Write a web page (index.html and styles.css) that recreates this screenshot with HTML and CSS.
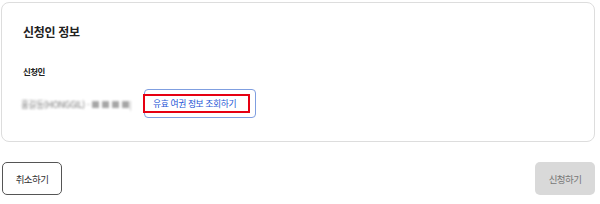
FILE: index.html
```html
<!DOCTYPE html>
<html lang="ko">
<head>
    <meta charset="UTF-8">
    <meta name="viewport" content="width=device-width, initial-scale=1.0">
    <title>신청인 정보</title>
    <link rel="stylesheet" href="styles.css">
</head>
<body>
    <div class="page">
        <!-- 신청인 정보 카드 -->
        <section class="info-card">
            <h2 class="info-title">신청인 정보</h2>
            <div class="field">
                <div class="field-label">신청인</div>
                <div class="field-row">
                    <span class="applicant-name">홍길동(HONGGIL) <span class="applicant-num">- ■ ■ ■ ■|</span></span>
                    <button class="passport-btn"><span class="passport-mark">유효 여권 정보 조회하기</span></button>
                </div>
            </div>
        </section>

        <!-- 하단 버튼 -->
        <div class="actions">
            <button class="btn btn-cancel">취소하기</button>
            <button class="btn btn-submit" disabled>신청하기</button>
        </div>
    </div>
</body>
</html>
```

FILE: styles.css
```css
body {
    margin: 0;
    background: white;
    font-family: "Noto Sans CJK KR", "Noto Sans", sans-serif;
    color: #222;
}

.page {
    width: 594px;
    padding: 2px 0 0 1px;
}

.info-card {
    border: 1px solid #ddd;
    border-radius: 8px;
    padding: 20px 21px 18px;
    height: 140px;
    box-sizing: border-box;
}

.info-title {
    margin: 0;
    font-size: 12px;
    font-weight: bold;
    line-height: 18px;
    letter-spacing: -0.3px;
}

.field {
    margin-top: 23px;
}

.field-label {
    font-size: 8.5px;
    font-weight: bold;
    line-height: 14px;
    letter-spacing: -0.6px;
}

.field-row {
    display: flex;
    align-items: center;
    gap: 10px;
    margin-top: 11px;
}

.applicant-name {
    flex-shrink: 0;
    width: 111px;
    margin-left: -2px;
    padding-right: 2px;
    white-space: nowrap;
    font-size: 8.6px;
    color: #777;
    filter: blur(1.1px);
    letter-spacing: -0.3px;
}

.applicant-num {
    color: #a5a5a5;
    letter-spacing: -0.5px;
}

.passport-btn {
    display: flex;
    align-items: center;
    width: 112px;
    height: 29px;
    padding: 0;
    border: 1px solid #7f9ee0;
    border-radius: 4px;
    background: white;
    font-family: inherit;
    cursor: pointer;
}

.passport-mark {
    display: block;
    width: 107px;
    height: 19px;
    box-sizing: border-box;
    margin-left: -2px;
    padding-left: 8px;
    border: 2px solid #e60012;
    color: #2455d6;
    font-size: 8.8px;
    line-height: 15px;
    text-align: left;
    white-space: nowrap;
    letter-spacing: -0.4px;
}

.actions {
    display: flex;
    justify-content: space-between;
    margin-top: 20px;
}

.btn {
    width: 60px;
    height: 33px;
    border-radius: 5px;
    font-family: inherit;
    font-size: 9.5px;
    letter-spacing: -0.6px;
    cursor: pointer;
}

.btn-cancel {
    margin-left: 1px;
    border: 1px solid #555;
    background: white;
    color: #333;
}

.btn-submit {
    border: none;
    background: #d9d9d9;
    color: #777;
}
```
